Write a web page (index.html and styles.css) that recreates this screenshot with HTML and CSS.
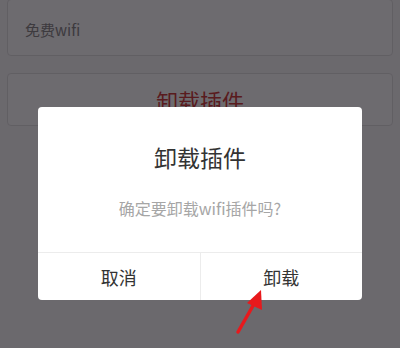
FILE: index.html
```html
<!DOCTYPE html>
<html lang="zh-CN">
<head>
    <meta charset="UTF-8">
    <meta name="viewport" content="width=device-width, initial-scale=1.0">
    <title>卸载插件</title>
    <link rel="stylesheet" href="styles.css">
</head>
<body>
    <div class="page">
        <div class="card card-name">免费wifi</div>
        <div class="card card-action">卸载插件</div>
    </div>

    <div class="mask"></div>

    <div class="dialog">
        <div class="dialog-body">
            <div class="dialog-title">卸载插件</div>
            <div class="dialog-msg">确定要卸载wifi插件吗?</div>
        </div>
        <div class="dialog-btns">
            <div class="dialog-btn">取消</div>
            <div class="dialog-btn">卸载</div>
        </div>
    </div>

    <svg class="arrow" width="40" height="52" viewBox="0 0 40 52">
        <line x1="6" y1="46" x2="22" y2="18" stroke="#e8191c" stroke-width="3.5" stroke-linecap="round"/>
        <polygon points="29,4 30,24 15,17" fill="#e8191c"/>
    </svg>
</body>
</html>
```

FILE: styles.css
```css
body {
    margin: 0;
    padding: 0;
    font-family: "Noto Sans CJK SC", "Noto Sans", sans-serif;
    background-color: #f3f2f5;
    height: 348px;
    overflow: hidden;
}
.page {
    display: flex;
    flex-direction: column;
    gap: 17px;
    padding: 0 7px;
}
.card {
    background-color: #f8f7fa;
    border: 1px solid #dcdbde;
    border-radius: 4px;
}
.card-name {
    height: 57px;
    margin-top: -1px;
    padding: 4px 0 0 17px;
    box-sizing: border-box;
    display: flex;
    align-items: center;
    font-size: 15px;
    color: #858487;
}
.card-action {
    height: 53px;
    box-sizing: border-box;
    display: flex;
    align-items: center;
    justify-content: center;
    font-size: 22px;
    color: #c93a3a;
}
.mask {
    position: fixed;
    top: 0;
    left: 0;
    right: 0;
    bottom: 0;
    background-color: rgba(8, 5, 10, 0.58);
}
.dialog {
    position: fixed;
    left: 38px;
    top: 107px;
    width: 324px;
    height: 193px;
    background-color: #fff;
    border-radius: 4px;
    display: flex;
    flex-direction: column;
}
.dialog-body {
    height: 145px;
    display: flex;
    flex-direction: column;
    align-items: center;
}
.dialog-title {
    margin-top: 34px;
    font-size: 23px;
    line-height: 32px;
    color: #333;
}
.dialog-msg {
    margin-top: 25px;
    font-size: 16px;
    line-height: 20px;
    color: #a6a6a6;
}
.dialog-btns {
    flex: 1;
    display: flex;
    border-top: 1px solid #ececec;
}
.dialog-btn {
    flex: 1;
    display: flex;
    align-items: center;
    justify-content: center;
    font-size: 18px;
    color: #333;
}
.dialog-btn + .dialog-btn {
    border-left: 1px solid #ececec;
}
.arrow {
    position: fixed;
    left: 232px;
    top: 286px;
}
```
